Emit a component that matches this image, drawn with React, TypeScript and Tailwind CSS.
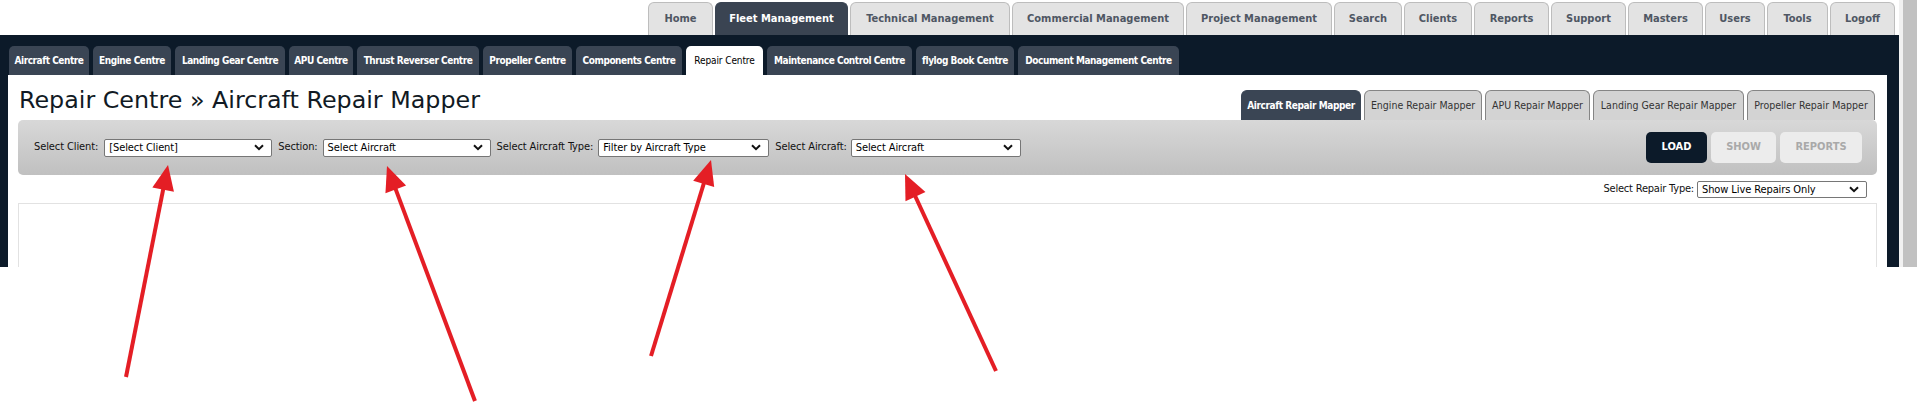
import React from "react";

const topTabs: { label: string; w: string; active?: boolean }[] = [
  { label: "Home", w: "w-[65px]" },
  { label: "Fleet Management", w: "w-[133px]", active: true },
  { label: "Technical Management", w: "w-[160px]" },
  { label: "Commercial Management", w: "w-[172px]" },
  { label: "Project Management", w: "w-[146px]" },
  { label: "Search", w: "w-[68px]" },
  { label: "Clients", w: "w-[68px]" },
  { label: "Reports", w: "w-[75px]" },
  { label: "Support", w: "w-[75px]" },
  { label: "Masters", w: "w-[75px]" },
  { label: "Users", w: "w-[60px]" },
  { label: "Tools", w: "w-[61px]" },
  { label: "Logoff", w: "w-[65px]" },
];

const centreTabs: { label: string; w: string; active?: boolean }[] = [
  { label: "Aircraft Centre", w: "w-[80px]" },
  { label: "Engine Centre", w: "w-[78px]" },
  { label: "Landing Gear Centre", w: "w-[110px]" },
  { label: "APU Centre", w: "w-[64px]" },
  { label: "Thrust Reverser Centre", w: "w-[122px]" },
  { label: "Propeller Centre", w: "w-[89px]" },
  { label: "Components Centre", w: "w-[106px]" },
  { label: "Repair Centre", w: "w-[77px]", active: true },
  { label: "Maintenance Control Centre", w: "w-[145px]" },
  { label: "flylog Book Centre", w: "w-[98px]" },
  { label: "Document Management Centre", w: "w-[161px]" },
];

const mapperTabs: { label: string; w: string; active?: boolean }[] = [
  { label: "Aircraft Repair Mapper", w: "w-[120px]", active: true },
  { label: "Engine Repair Mapper", w: "w-[118px]" },
  { label: "APU Repair Mapper", w: "w-[105px]" },
  { label: "Landing Gear Repair Mapper", w: "w-[151px]" },
  { label: "Propeller Repair Mapper", w: "w-[128px]" },
];

function Chevron() {
  return (
    <svg width="10" height="7" viewBox="0 0 10 7" className="shrink-0">
      <path d="M1 1.2 L5 5.2 L9 1.2" stroke="#111" strokeWidth="2" fill="none" />
    </svg>
  );
}

function FakeSelect({ text, w, h = "h-[18px]" }: { text: string; w: string; h?: string }) {
  return (
    <div
      className={`${w} ${h} shrink-0 flex items-center justify-between bg-white border border-[#767676] rounded-[2px] pl-[4px] pr-[7px] text-[11px] tracking-[-0.1px] text-black leading-none`}
    >
      <span>{text}</span>
      <Chevron />
    </div>
  );
}

function Arrow({ x1, y1, x2, y2 }: { x1: number; y1: number; x2: number; y2: number }) {
  const dx = x2 - x1;
  const dy = y2 - y1;
  const len = Math.hypot(dx, dy);
  const ux = dx / len;
  const uy = dy / len;
  const head = 25;
  const half = 11;
  const bx = x2 - ux * head;
  const by = y2 - uy * head;
  const px = -uy;
  const py = ux;
  const pts = `${x2},${y2} ${bx + px * half},${by + py * half} ${bx - px * half},${by - py * half}`;
  return (
    <g>
      <line x1={x1} y1={y1} x2={bx + ux * 3} y2={by + uy * 3} stroke="#e41e25" strokeWidth="4" />
      <polygon points={pts} fill="#e41e25" />
    </g>
  );
}

export default function App() {
  return (
    <div className="relative w-[1917px] h-[405px] bg-white overflow-hidden font-['DejaVu_Sans_Condensed','DejaVu_Sans',sans-serif]">
      <div className="flex h-[267px] overflow-hidden">
        {/* page */}
        <div className="flex-1 flex flex-col min-w-0">
          {/* top navigation */}
          <div className="h-[35px] flex items-end justify-end gap-[2px] pr-[4px] bg-white">
            {topTabs.map((t) => (
              <div
                key={t.label}
                className={`${t.w} h-[33px] flex items-center justify-center rounded-t-[6px] border border-b-0 text-[11px] font-bold ${
                  t.active
                    ? "bg-[#3a4452] border-[#3a4452] text-white"
                    : "bg-[#e3e3e3] border-[#bdbdbd] text-[#4f5763]"
                }`}
              >
                {t.label}
              </div>
            ))}
          </div>

          {/* dark band */}
          <div className="flex-1 flex flex-col bg-[#0c1a29] pl-[8px] pr-[12px]">
            <div className="h-[40px] flex items-end gap-[4px] pl-[1px]">
              {centreTabs.map((t) => (
                <div
                  key={t.label}
                  className={`${t.w} h-[29px] flex items-center justify-center rounded-t-[5px] text-[10px] whitespace-nowrap ${
                    t.active
                      ? "bg-white text-black tracking-[-0.1px]"
                      : "bg-[#3a4554] text-white font-bold tracking-[-0.45px]"
                  }`}
                >
                  {t.label}
                </div>
              ))}
            </div>

            {/* white content */}
            <div className="flex-1 flex flex-col bg-white px-[10px]">
              <div className="h-[45px] flex items-end justify-between">
                <h1 className="self-start mt-[11px] ml-[1px] text-[23.8px] leading-[28px] text-[#111a24] font-['DejaVu_Sans',sans-serif]">
                  Repair Centre » Aircraft Repair Mapper
                </h1>
                <div className="flex items-end gap-[3px] mr-[2px]">
                  {mapperTabs.map((t) => (
                    <div
                      key={t.label}
                      className={`${t.w} h-[30px] flex items-center justify-center rounded-t-[6px] border border-b-0 whitespace-nowrap ${
                        t.active
                          ? "bg-[#3a4554] border-[#3a4554] text-white font-bold text-[10px] tracking-[-0.4px]"
                          : "bg-[#d3d3d3] border-[#858585] text-[#333] text-[10.5px]"
                      }`}
                    >
                      {t.label}
                    </div>
                  ))}
                </div>
              </div>

              {/* filter bar */}
              <div className="h-[55px] flex items-center justify-between rounded-[5px] bg-linear-to-b from-[#d8d8d8] to-[#c0c0c0] pl-[16px] pr-[15px] text-[11px] text-[#111]">
                <div className="flex items-center tracking-[-0.1px]">
                  <span className="mr-[6px]">Select Client:</span>
                  <FakeSelect text="[Select Client]" w="w-[168px]" />
                  <span className="ml-[6px] mr-[5px]">Section:</span>
                  <FakeSelect text="Select Aircraft" w="w-[168px]" />
                  <span className="ml-[6px] mr-[5px]">Select Aircraft Type:</span>
                  <FakeSelect text="Filter by Aircraft Type" w="w-[171px]" />
                  <span className="ml-[6px] mr-[4px]">Select Aircraft:</span>
                  <FakeSelect text="Select Aircraft" w="w-[170px]" />
                </div>
                <div className="flex items-center gap-[4px] text-[11px] font-bold">
                  <div className="w-[61px] h-[31px] flex items-center justify-center rounded-[5px] bg-[#0c1a29] text-white">
                    LOAD
                  </div>
                  <div className="w-[65px] h-[31px] flex items-center justify-center rounded-[5px] bg-[#ececec] text-[#a9a9a9]">
                    SHOW
                  </div>
                  <div className="w-[82px] h-[31px] flex items-center justify-center rounded-[5px] bg-[#ececec] text-[#a9a9a9]">
                    REPORTS
                  </div>
                </div>
              </div>

              {/* repair type row */}
              <div className="h-[28px] flex items-center justify-end pr-[10px] text-[11px] tracking-[-0.2px] text-[#111]">
                <span className="mr-[3px]">Select Repair Type:</span>
                <FakeSelect text="Show Live Repairs Only" w="w-[170px]" h="h-[17px]" />
              </div>

              {/* results panel */}
              <div className="flex-1 border border-[#e2e2e2] border-b-0"></div>
            </div>
          </div>
        </div>

        {/* scrollbar */}
        <div className="w-[18px] flex bg-[#f1f1f1]">
          <div className="ml-[4px] flex-1 bg-[#c1c1c1]"></div>
        </div>
      </div>

      {/* annotation arrows */}
      <svg className="absolute inset-0 pointer-events-none" width="1917" height="405">
        <Arrow x1={126} y1={377} x2={168} y2={165} />
        <Arrow x1={475} y1={401} x2={387} y2={166} />
        <Arrow x1={651} y1={356} x2={711} y2={160} />
        <Arrow x1={996} y1={371} x2={905} y2={174} />
      </svg>
    </div>
  );
}
